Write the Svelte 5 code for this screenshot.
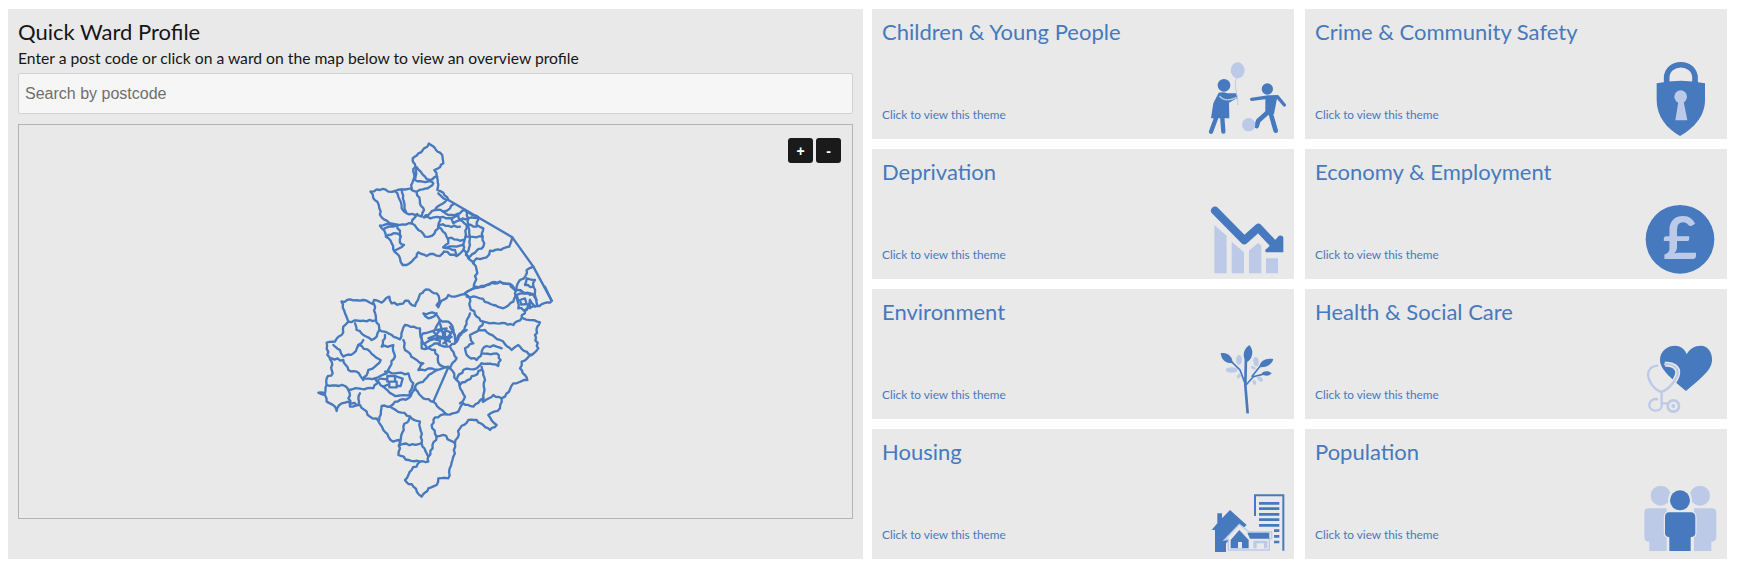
<script>
  // ward boundaries, traced in two chunks (north + south of the county)
  const northWards = [
    'M387,41 L398,48 L408,60 L420,68 L428,85 L430,100 L420,112 L403,120 L410,140 L415,165 L412,180 L430,188 L445,210',
    'M387,41 L372,55 L355,70 L338,85 L345,103 L340,125 L340,150 L335,175',
    'M350,112 L362,125 L375,140 L390,150 L412,140',
    'M350,112 L345,150 L368,155 L395,155 L400,160 L390,170 L368,178 L350,185 L335,180',
    'M212,185 L240,180 L255,178 L265,185 L285,183 L305,178 L335,175',
    'M212,185 L220,205 L232,215 L238,235 L245,262 L260,272 L280,282 L292,285',
    'M285,183 L295,200 L305,235 L320,250 L345,255 L352,252',
    'M305,178 L312,215 L318,245',
    'M350,188 L360,220 L372,240 L365,260 L350,255 L335,280 L290,285',
    'M372,262 L385,255 L405,240 L420,225 L440,210 L415,190',
    'M405,240 L430,245 L450,235 L462,222',
    'M430,245 L445,255 L480,250 L495,240 L530,258',
    'M240,287 L268,282 L292,285',
    'M240,287 L252,300 L258,320 L275,340 L283,365 L300,385 L308,405 L320,405 L335,395 L350,380 L355,367 L380,378 L390,372 L420,378 L432,365',
    'M250,298 L280,290 L292,285 L302,320',
    'M258,320 L290,310 L302,320 L300,338 L312,345 L283,362',
    'M335,280 L355,300 L375,320 L395,318 L415,295 L420,262',
    'M372,262 L420,262 L455,265 L475,255 L480,270 L500,285 L497,320 L490,360 L470,378 L432,365',
    'M415,290 L440,320 L445,340 L430,352 L470,350 L490,345',
    'M420,285 L480,290',
    'M455,265 L460,280 L480,270',
    'M445,325 L490,330',
    'M430,352 L465,360 L470,378',
    'M505,265 L535,262 L530,285 L550,295 L548,320 L510,320 L505,290 Z',
    'M495,240 L505,265',
    'M530,258 L535,262',
    'M480,270 L505,265',
    'M500,285 L530,290',
    'M548,320 L550,350 L530,362 L505,385 L498,370 L510,345 L510,320',
    'M497,320 L510,320',
    'M490,360 L500,375',
    'M498,375 L520,400 L530,385 L560,382 L570,362 L610,355 L628,350 L637,322',
    'M520,400 L530,420 L522,475 L495,490',
    'M522,475 L560,465 L600,455 L630,462 L645,480',
    'M700,410 L680,420 L672,445 L660,450 L650,470 L645,490 L655,515',
    'M680,445 L705,450 L700,470 L675,465 Z',
    'M645,480 L680,490 L700,495 L710,510',
    'M700,470 L705,490'
  ]

  const southWards = [
    'M125,65 L150,58 L190,60 L218,72 L222,60 L245,68 L268,50 L275,70 L300,72 L325,62 L345,78 L360,42 L378,28 L410,40 L418,65 L410,75 L415,82 L420,70 L445,45 L465,50 L495,42',
    'M495,42 L520,25 L560,15 L600,5 L630,12 L645,30',
    'M495,42 L510,55 L510,80 L530,110 L550,125 L590,130 L640,135 L665,115 L675,90 L710,78 L750,68 L755,62',
    'M500,50 L540,55 L580,75 L610,85 L640,65 L650,45 L680,40',
    'M650,45 L655,85 L680,90 L690,60 L705,80',
    'M660,30 L690,45 L705,45',
    'M670,115 L720,127 L705,165 L715,205 L695,225 L660,200 L655,195 L635,210 L600,180 L555,150 L530,155 L510,165 L520,190 L495,205 L500,225 L530,240 L545,220',
    'M550,125 L535,150',
    'M545,215 L560,198 L590,200 L605,205',
    'M545,220 L590,220 L602,240 L595,258 L545,250',
    'M695,225 L665,245 L660,265 L682,300 L640,310 L615,350 L605,355 L580,345 L550,365 L548,355 L520,380 L490,370 L475,395 L440,403 L400,365',
    'M605,355 L600,385 L565,405 L590,435 L570,450 L530,420 L505,420 L480,445 L465,490 L430,465 L410,470 L395,435 L405,412 L440,403',
    'M465,490 L460,530 L445,595 L415,595 L410,615 L385,625 L365,650 L340,620 L315,600 L335,570 L360,545 L385,545 L385,530 L410,470',
    'M125,65 L145,125 L130,140 L125,165 L105,185 L80,188 L82,225 L95,245 L98,280 L80,295 L80,315 L75,340 L55,338 L75,345 L80,365 L105,380 L110,393 L125,370 L145,365 L180,375 L210,410 L230,415 L250,450 L265,470 L280,485 L298,480 L300,505 L295,525 L325,540 L360,545',
    'M145,125 L190,122 L228,120 L222,72',
    'M228,120 L238,150 L230,170 L215,180 L190,165 L170,150 L165,130',
    'M190,180 L175,195 L160,220 L130,230 L120,210 L100,195',
    'M95,235 L130,240 L145,270 L170,275 L190,300 L205,270 L225,260 L242,240 L210,215 L175,195',
    'M238,150 L265,160 L300,178 L315,135 L360,145 L365,205 L405,210 L420,255 L445,262',
    'M255,165 L245,200 L280,195 L285,230 L270,260 L260,280 L225,295 L190,295',
    'M80,315 L135,318 L145,330 L175,325 L220,325 L235,300',
    'M145,330 L150,380 L175,375 L180,340',
    'M310,180 L315,210 L350,240 L370,250 L355,270 L395,265 L410,270 L445,260',
    'M450,265 L470,300 L495,350 L480,370',
    'M470,300 L490,270 L530,265 L545,250',
    'M545,260 L555,300 L548,365',
    'M480,315 L545,270',
    'M410,270 L375,298 L345,320 L370,355 L400,365',
    'M345,320 L325,355 L285,365 L270,380 L245,378 L238,420',
    'M270,380 L330,410 L360,425 L365,490 L385,530',
    'M330,410 L310,440 L300,495 L365,490',
    'M255,275 L285,280 L325,280 L340,310 L330,345 L285,348 L250,320 L225,295',
    'M370,160 L405,150 L420,120 L445,125 L460,150 L470,185 L440,200 L405,190 L380,205 L365,175 Z',
    'M420,120 L405,100 L370,100 L385,115 L410,100',
    'M470,185 L495,140 L510,100',
    'M465,185 L480,160 L500,150',
    'M450,200 L470,235 L450,265'
  ]

  // these run dead straight in the source, and the tiny urban wards stay clean
  const straightNorth = ['M445,210 L637,322 L700,410 L755,512']
  const straightSouth = [
    'M755,62 L735,20',
    'M445,262 L400,365',
    // south city cluster
    'M262,288 H285 V305 H262 Z M268,305 V322 H290 V305 M285,288 L308,296 L302,318 L290,318 M240,296 L262,298 M250,320 L268,312',
    // central cluster
    'M400,155 L420,175 L445,170 L460,150 M420,130 L430,165 L440,195 M395,180 L420,170 L450,185 M410,150 L440,145',
    'M385,175 L410,165 M375,190 L400,175 M450,140 L465,165 M430,190 L455,170',
    'M408,165 L420,150 L432,158 L426,176 Z M436,150 L452,158 L448,174 L434,172 Z M405,178 L420,182 L418,195',
    // coastal cluster
    'M660,60 L675,55 L680,72 L664,74 Z M690,60 L690,85 M705,45 L712,78'
  ]

  // boundaries are hand traced with few points, so roughen them a bit
  function wiggle(d) {
    let seed = d.length * 7 + 3
    const rnd = () => {
      seed = (seed * 9301 + 49297) % 233280
      return seed / 233280 - 0.5
    }
    const pts = d.match(/-?\d+,-?\d+/g).map((p) => p.split(',').map(Number))
    if (d.endsWith('Z')) pts.push(pts[0])
    let out = `M${pts[0][0]},${pts[0][1]}`
    for (let i = 1; i < pts.length; i++) {
      const [x0, y0] = pts[i - 1]
      const [x1, y1] = pts[i]
      const len = Math.hypot(x1 - x0, y1 - y0)
      const n = Math.max(1, Math.round(len / 9))
      for (let k = 1; k <= n; k++) {
        const t = k / n
        const off = k === n ? 0 : rnd() * 7
        out += ` L${(x0 + (x1 - x0) * t - ((y1 - y0) / len) * off).toFixed(1)},${(y0 + (y1 - y0) * t + ((x1 - x0) / len) * off).toFixed(1)}`
      }
    }
    return out
  }

  const themes = [
    'Children & Young People',
    'Crime & Community Safety',
    'Deprivation',
    'Economy & Employment',
    'Environment',
    'Health & Social Care',
    'Housing',
    'Population'
  ]

  const blue = '#4679bd'
  const light = '#bccae8'
  const bg = '#e9e9e9'
</script>

{#snippet icon(i)}
  {#if i === 0}
    <svg viewBox="84 27 240 240">
      <ellipse cx="173" cy="61" rx="21" ry="24" fill={light} />
      <path d="M170,84 C158,110 176,130 173,165" fill="none" stroke={light} stroke-width="3" />
      <circle cx="132" cy="106" r="19" fill={blue} />
      <path d="M116,128 Q130,124 142,130 L168,130 L172,144 L147,158 L148,205 L93,205 L100,160 Z" fill={blue} />
      <path d="M108,205 L93,245 M127,205 L130,245" stroke={blue} stroke-width="13" stroke-linecap="round" />
      <path d="M118,138 C130,152 150,152 170,142" fill="none" stroke={light} stroke-width="4" />
      <circle cx="262" cy="117" r="17" fill={blue} />
      <path d="M215,148 L265,141 L292,140 L313,165" fill="none" stroke={blue} stroke-width="10" stroke-linecap="round" stroke-linejoin="round" />
      <path d="M256,142 L292,140 L282,192 L256,192 Z" fill={blue} />
      <path d="M265,185 L235,212 L230,228 M272,190 L287,242" fill="none" stroke={blue} stroke-width="14" stroke-linecap="round" stroke-linejoin="round" />
      <circle cx="206" cy="224" r="20" fill={light} />
    </svg>
  {:else if i === 1}
    <svg viewBox="33 27 240 240">
      <path d="M110,100 V84 C110,31 195,31 195,84 V100" fill="none" stroke={blue} stroke-width="17" />
      <path d="M80,100 Q152,84 225,100 V150 C225,200 190,235 150,258 C110,235 80,200 80,150 Z" fill={blue} />
      <circle cx="152" cy="140" r="19" fill={light} />
      <path d="M146,150 L136,211 H172 L160,150 Z" fill={light} />
    </svg>
  {:else if i === 2}
    <svg viewBox="54 12 240 240">
      <path d="M73,90 L110,122 V235 H73 Z M125,140 L162,172 V235 H125 Z M177,167 L205,143 L214,152 V235 H177 Z M228,190 H264 V235 H228 Z" fill={light} />
      <path d="M75,47 L163,136 L205,98 L250,146" fill="none" stroke={blue} stroke-width="24" stroke-linecap="round" stroke-linejoin="round" />
      <path d="M267,122 Q280,120 280,130 V172 H228 Q222,165 232,160 Z" fill={blue} />
    </svg>
  {:else if i === 3}
    <svg viewBox="33 12 240 240">
      <circle cx="150" cy="133" r="103" fill={blue} />
      <text x="150" y="192" text-anchor="middle" class="pound" fill={light}>£</text>
    </svg>
  {:else if i === 4}
    <svg viewBox="54 12 240 240">
      <path d="M173,235 L166,150 L168,62" fill="none" stroke={blue} stroke-width="8" />
      <path d="M168,150 L190,125 L230,115 M165,145 L150,105 L112,68 M185,125 L215,88" fill="none" stroke={blue} stroke-width="5" />
      <path d="M178,30 C192,45 190,70 170,82 C155,65 160,42 178,30 Z" fill={blue} />
      <path d="M92,55 C115,50 130,70 127,85 C105,85 95,75 92,55 Z" fill={blue} />
      <path d="M250,72 C230,68 210,75 208,97 C230,98 245,90 250,72 Z" fill={blue} />
      <path d="M245,115 C235,105 220,108 215,115 C225,125 235,125 245,115 Z" fill={blue} />
      <g fill={light}>
        <ellipse cx="147" cy="75" rx="9" ry="15" />
        <ellipse cx="198" cy="80" rx="8" ry="14" transform="rotate(-10 198 80)" />
        <ellipse cx="125" cy="105" rx="18" ry="8" />
        <ellipse cx="147" cy="123" rx="5" ry="8" transform="rotate(40 147 123)" />
        <ellipse cx="190" cy="98" rx="8" ry="4" transform="rotate(20 190 98)" />
        <ellipse cx="210" cy="132" rx="10" ry="6" transform="rotate(40 210 132)" />
        <ellipse cx="193" cy="142" rx="5" ry="8" transform="rotate(-20 193 142)" />
      </g>
    </svg>
  {:else if i === 5}
    <svg viewBox="33 12 240 240">
      <path d="M168,168 C130,135 90,105 90,75 C90,45 115,32 135,32 C150,32 165,42 170,58 C178,42 195,32 212,32 C235,32 248,55 246,78 C243,110 205,135 168,168 Z" fill={blue} />
      <path d="M82,92 C55,95 50,115 58,135 C65,155 85,170 95,170 C115,165 140,135 143,115 C145,100 130,85 105,88" fill="none" stroke={bg} stroke-width="15" />
      <path d="M82,92 C55,95 50,115 58,135 C65,155 85,170 95,170 C115,165 140,135 143,115 C145,100 130,85 105,88" fill="none" stroke={light} stroke-width="7" stroke-linecap="round" />
      <path d="M95,170 V212 C95,232 60,232 58,212 C58,195 72,190 84,193 M95,205 H112" fill="none" stroke={light} stroke-width="7" />
      <circle cx="130" cy="213" r="17" fill="none" stroke={light} stroke-width="8" />
      <circle cx="130" cy="213" r="6" fill={light} />
    </svg>
  {:else if i === 6}
    <svg viewBox="54 -3 240 240">
      <path d="M195,108 V46 H280 V212" fill="none" stroke={blue} stroke-width="6" />
      <path d="M207,70 H268 M207,86 H268 M207,103 H268 M207,119 H268 M207,136 H268 M252,152 H268 M252,169 H268 M252,186 H268" stroke={blue} stroke-width="8" />
      <path d="M65,150 L82,130 V100 H96 V115 L120,90 L170,135 L108,190 V216 H75 V150 Z" fill={blue} />
      <path d="M103,180 L148,133 L178,156 H245 V176 H238 V210 H115 V178 Z" fill={bg} stroke={light} stroke-width="4" />
      <path d="M122,180 L148,150 L176,180 V205 H122 Z" fill={blue} />
      <path d="M172,158 H238 V176 H180 Z" fill={blue} />
      <rect x="144" y="186" width="12" height="19" fill={bg} />
      <path d="M190,182 H232 V205 H222 V190 H200 V205 H190 Z" fill={light} />
    </svg>
  {:else}
    <svg viewBox="33 -3 240 240">
      <circle cx="92" cy="47" r="30" fill={light} />
      <circle cx="210" cy="47" r="30" fill={light} />
      <path d="M56,85 H110 V213 H58 V185 Q43,185 43,170 V98 Q43,85 56,85 Z" fill={light} />
      <path d="M192,85 H246 Q259,85 259,98 V170 Q259,185 244,185 V213 H192 Z" fill={light} />
      <circle cx="150" cy="61" r="36" fill={bg} />
      <circle cx="150" cy="61" r="30" fill={blue} />
      <path d="M118,97 H182 Q196,97 196,112 V160 Q196,170 182,172 V213 H118 V172 Q105,170 105,160 V112 Q105,97 118,97 Z" fill={blue} stroke={bg} stroke-width="7" paint-order="stroke" />
    </svg>
  {/if}
{/snippet}

<div class="page">
  <section class="profile">
    <h1>Quick Ward Profile</h1>
    <p>Enter a post code or click on a ward on the map below to view an overview profile</p>
    <input type="text" placeholder="Search by postcode" />
    <div class="map">
      <svg class="wards" viewBox="19 125 833 393">
        <g transform="translate(300 130) scale(0.3333)">
          {#each northWards as d}<path d={wiggle(d)} />{/each}
          {#each straightNorth as d}<path {d} />{/each}
        </g>
        <g transform="translate(300 280) scale(0.3333)">
          {#each southWards as d}<path d={wiggle(d)} />{/each}
          {#each straightSouth as d}<path {d} />{/each}
        </g>
      </svg>
      <div class="zoom">
        <button>+</button>
        <button>-</button>
      </div>
    </div>
  </section>

  <div class="themes">
    {#each themes as title, i}
      <a class="theme" href="#top">
        <h2>{title}</h2>
        <div class="foot">
          <span>Click to view this theme</span>
          <span class="icon">{@render icon(i)}</span>
        </div>
      </a>
    {/each}
  </div>
</div>

<style>
  :global(body) {
    background: #fff;
    font-family: Lato, sans-serif;
  }
  .page {
    display: flex;
    align-items: flex-start;
    gap: 9px;
    padding: 9px 0 0 8px;
  }
  .profile {
    width: 855px;
    height: 550px;
    box-sizing: border-box;
    padding: 11px 10px 0;
    background: #e9e9e9;
    display: flex;
    flex-direction: column;
  }
  h1 {
    margin: 0;
    font-size: 22px;
    line-height: 24px;
    font-weight: 400;
    color: #161616;
  }
  p {
    margin: 4px 0 0;
    font-size: 15.7px;
    line-height: 20px;
    color: #161616;
  }
  input {
    margin-top: 5px;
    height: 41px;
    width: 100%;
    flex: none;
    box-sizing: border-box;
    padding: 0 6px;
    border: 1px solid #d2d2d2;
    border-radius: 2px;
    background: #f6f6f6;
    font-family: "Liberation Sans", sans-serif;
    font-size: 16px;
    outline: none;
  }
  input::placeholder {
    color: #6f6f6f;
    opacity: 1;
  }
  .map {
    position: relative;
    flex: none;
    margin-top: 10px;
    height: 395px;
    border: 1px solid #b4b4b4;
    box-sizing: border-box;
  }
  .wards {
    display: block;
    width: 100%;
    height: 100%;
  }
  .wards path {
    fill: none;
    stroke: #4679bd;
    stroke-width: 7;
    stroke-linejoin: round;
    stroke-linecap: round;
  }
  .zoom {
    position: absolute;
    top: 13px;
    right: 11px;
    display: flex;
    gap: 3px;
  }
  .zoom button {
    width: 25px;
    height: 25px;
    padding: 0;
    border: 0;
    border-radius: 3px;
    background: #1a1a1a;
    color: #fff;
    font-family: "Liberation Sans", sans-serif;
    font-size: 14px;
    font-weight: 700;
  }
  .themes {
    display: grid;
    grid-template-columns: 422px 422px;
    grid-auto-rows: 130px;
    column-gap: 11px;
    row-gap: 10px;
  }
  .theme {
    display: flex;
    flex-direction: column;
    justify-content: space-between;
    padding: 10px 6px 0 10px;
    background: #e9e9e9;
    color: #4679bd;
    text-decoration: none;
    box-sizing: border-box;
  }
  h2 {
    margin: 0;
    font-size: 22px;
    line-height: 26px;
    font-weight: 400;
  }
  .foot {
    display: flex;
    justify-content: space-between;
    align-items: flex-end;
    font-size: 11.8px;
    line-height: 16px;
  }
  .foot > span:first-child {
    margin-bottom: 16px;
  }
  .icon {
    display: block;
    width: 80px;
    height: 80px;
  }
  .icon svg {
    display: block;
    width: 80px;
    height: 80px;
  }
  .pound {
    font-family: Lato, sans-serif;
    font-size: 178px;
    font-weight: 700;
  }
</style>
